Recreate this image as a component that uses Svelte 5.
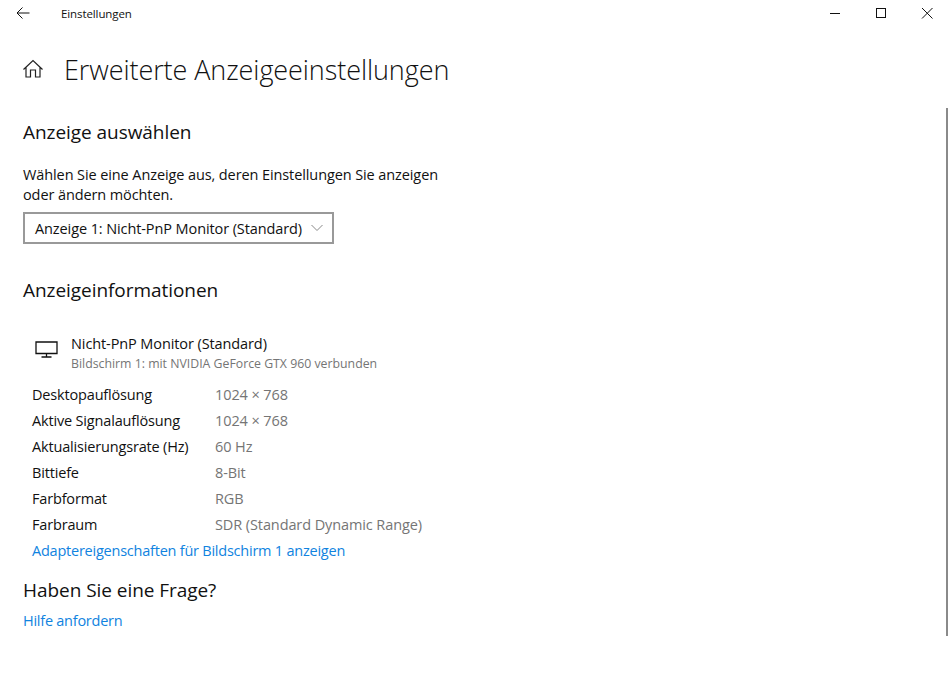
<script>
  const rows = [
    ['Desktopauflösung', '1024 × 768'],
    ['Aktive Signalauflösung', '1024 × 768'],
    ['Aktualisierungsrate (Hz)', '60 Hz'],
    ['Bittiefe', '8-Bit'],
    ['Farbformat', 'RGB'],
    ['Farbraum', 'SDR (Standard Dynamic Range)']
  ];
</script>

<div class="window">
  <header class="titlebar">
    <svg class="back" width="16" height="16" viewBox="0 0 16 16">
      <path d="M14.500 8H2M7.500 2.500 2 8l5.500 5.500" fill="none" stroke="#111" stroke-width="1" />
    </svg>
    <span class="app-name">Einstellungen</span>
    <div class="controls">
      <svg width="46" height="28" viewBox="0 0 46 28"><path d="M18 13.500h10" stroke="#111" stroke-width="1" /></svg>
      <svg width="46" height="28" viewBox="0 0 46 28"><rect x="18.500" y="8.500" width="9" height="9" fill="none" stroke="#111" /></svg>
      <svg width="46" height="28" viewBox="0 0 46 28"><path d="M18 8l10.500 10.500M28.500 8 18 18.500" stroke="#111" stroke-width="1" fill="none" /></svg>
    </div>
  </header>

  <main class="content">
    <div class="page-title">
      <svg class="home" width="20" height="20" viewBox="0 0 20 20">
        <path d="M.5 10.500 10 1.500l9.500 9M3 8v10h4.500v-7h5v7H17V8" fill="none" stroke="#222" stroke-width="1.200" />
      </svg>
      <h1>Erweiterte Anzeigeeinstellungen</h1>
    </div>

    <h2 class="select-head">Anzeige auswählen</h2>
    <p class="desc">Wählen Sie eine Anzeige aus, deren Einstellungen Sie anzeigen oder ändern möchten.</p>
    <div class="select">
      <span>Anzeige 1: Nicht-PnP Monitor (Standard)</span>
      <svg width="12" height="8" viewBox="0 0 12 8"><path d="M.5 1 6 6.500 11.500 1" fill="none" stroke="#888" /></svg>
    </div>

    <h2 class="info-head">Anzeigeinformationen</h2>
    <div class="monitor">
      <svg class="monitor-icon" width="26" height="20" viewBox="0 0 26 20">
        <path d="M3 3h21v11.500H3zM13.500 14.500V18M8.500 18h10" fill="none" stroke="#111" stroke-width="1.300" />
      </svg>
      <div>
        <div class="monitor-name">Nicht-PnP Monitor (Standard)</div>
        <div class="monitor-sub">Bildschirm 1: mit NVIDIA GeForce GTX 960 verbunden</div>
      </div>
    </div>

    <dl class="props">
      {#each rows as [name, value]}
        <dt>{name}</dt>
        <dd>{value}</dd>
      {/each}
    </dl>
    <div class="adapter-link">Adaptereigenschaften für Bildschirm 1 anzeigen</div>

    <h2 class="help-head">Haben Sie eine Frage?</h2>
    <div class="help-link">Hilfe anfordern</div>
  </main>
  <div class="scrollbar"></div>
</div>

<style>
  :global(body) {
    margin: 0;
    background: #fff;
    font-family: "Open Sans", "Noto Sans", sans-serif;
    color: #111;
  }

  .window {
    position: relative;
    width: 949px;
    height: 673px;
    overflow: hidden;
  }

  .titlebar {
    display: flex;
    align-items: center;
    height: 28px;
  }

  .back {
    margin-left: 15px;
    margin-top: -2px;
  }

  .app-name {
    margin: -2px 0 0 30px;
    font-size: 11.500px;
    letter-spacing: -0.1px;
  }

  .controls {
    display: flex;
    margin-left: auto;
    margin-right: -1px;
  }

  .content {
    padding-left: 23px;
  }

  .page-title {
    display: flex;
    align-items: center;
    margin-top: 21px;
    height: 40px;
  }

  .home {
    flex: none;
  }

  h1 {
    margin: 0 0 0 21px;
    font-size: 27px;
    font-weight: 300;
    letter-spacing: -0.08px;
    white-space: nowrap;
  }

  h2 {
    margin: 0;
    font-size: 19px;
    font-weight: 400;
    line-height: 24px;
    letter-spacing: -0.05px;
  }

  .select-head {
    margin-top: 31px;
  }

  .desc {
    margin: 21px 0 0;
    width: 425px;
    font-size: 14.500px;
    line-height: 20px;
    letter-spacing: -0.1px;
  }

  .select {
    display: flex;
    align-items: center;
    justify-content: space-between;
    box-sizing: border-box;
    width: 311px;
    height: 32px;
    margin-top: 7px;
    padding: 0 9px 0 10px;
    border: 2px solid #999;
    font-size: 14.500px;
    letter-spacing: -0.1px;
  }

  .info-head {
    margin-top: 34px;
  }

  .monitor {
    display: flex;
    align-items: flex-start;
    gap: 12px;
    margin: 32px 0 0 10px;
  }

  .monitor-icon {
    flex: none;
    margin-top: 5px;
  }

  .monitor-name {
    font-size: 14.500px;
    line-height: 20px;
    letter-spacing: -0.1px;
  }

  .monitor-sub {
    font-size: 12.300px;
    line-height: 20px;
    color: #757575;
  }

  .props {
    display: grid;
    grid-template-columns: 183px 1fr;
    grid-auto-rows: 26px;
    align-items: center;
    margin: 7px 0 0 9px;
    font-size: 14.500px;
    letter-spacing: -0.1px;
  }

  dt {
    margin: 0;
    letter-spacing: -0.17px;
  }

  dd {
    margin: 0;
    color: #757575;
  }

  .adapter-link {
    margin: 1px 0 0 9px;
    font-size: 14.500px;
    line-height: 26px;
    letter-spacing: -0.23px;
    color: #1083e0;
  }

  .help-head {
    margin-top: 14px;
  }

  .help-link {
    margin-top: 9px;
    font-size: 14.500px;
    line-height: 20px;
    letter-spacing: -0.25px;
    color: #1083e0;
  }

  .scrollbar {
    position: absolute;
    top: 108px;
    right: 1px;
    width: 2px;
    height: 528px;
    background: #8a8a8a;
  }
</style>
